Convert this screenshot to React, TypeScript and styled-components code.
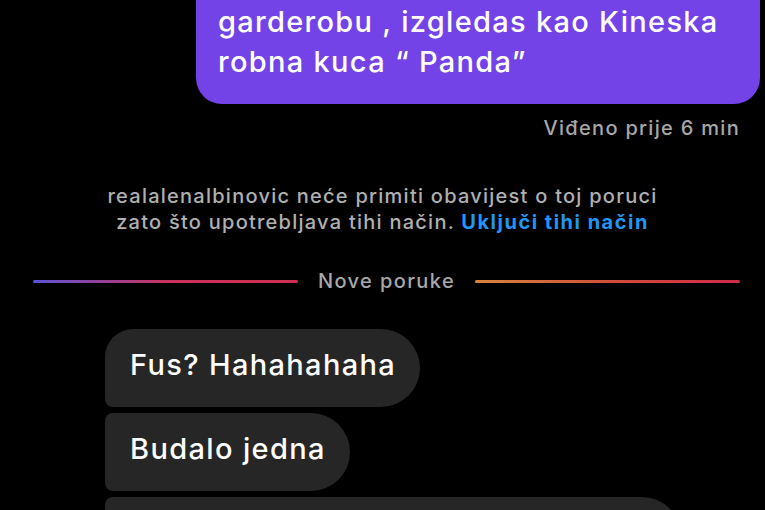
import React from "react";
import styled, { createGlobalStyle } from "styled-components";

const Global = createGlobalStyle`
  html, body { margin: 0; padding: 0; background: #000; }
  body { width: 765px; height: 510px; overflow: hidden; font-family: Inter, "Open Sans", "Liberation Sans", sans-serif; -webkit-font-smoothing: antialiased; }
`;

const Screen = styled.div`
  display: flex;
  flex-direction: column;
  width: 765px;
  height: 510px;
  overflow: hidden;
  background: #000;
`;

const OutRow = styled.div`
  display: flex;
  justify-content: flex-end;
  padding-right: 5px;
  margin-top: -40px;
`;

const OutBubble = styled.div`
  width: 564px;
  box-sizing: border-box;
  background: #7343e8;
  color: #fff;
  border-radius: 26px;
  padding: 42px 10px 22px 22px;
  font-size: 29px;
  line-height: 40px;
  font-weight: 500;
  letter-spacing: 1.3px;
`;

const SmallText = styled.div`
  font-size: 20px;
  line-height: 24px;
  font-weight: 500;
  letter-spacing: 1.3px;
  color: #a8a8a8;
`;

const Seen = styled(SmallText)`
  align-self: flex-end;
  margin-right: 25px;
  margin-top: 12px;
`;

const Notice = styled(SmallText)`
  margin-top: 43px;
  text-align: center;
  line-height: 26px;
  color: #b0b0b0;
  letter-spacing: 1.25px;
`;

const Link = styled.span`
  color: #2196f3;
  font-weight: 700;
  letter-spacing: 1.5px;
`;

const Divider = styled.div`
  display: flex;
  align-items: center;
  gap: 20px;
  margin-top: 34px;
  padding: 0 25px 0 33px;
`;

const Line = styled.div<{ $from: string; $mid: string; $to: string }>`
  flex: 1;
  height: 3px;
  border-radius: 2px;
  background: linear-gradient(90deg, ${(p) => p.$from}, ${(p) => p.$mid} 50%, ${(p) => p.$to});
`;

const DividerText = styled(SmallText)`
  letter-spacing: 1.4px;
`;

const InList = styled.div`
  display: flex;
  flex-direction: column;
  align-items: flex-start;
  gap: 6px;
  margin-top: 36px;
  padding-left: 105px;
`;

const InBubble = styled.div<{ $tl: number; $bl: number; $w?: number }>`
  box-sizing: border-box;
  height: 78px;
  ${(p) => (p.$w ? `width: ${p.$w}px;` : "")}
  display: flex;
  align-items: center;
  padding: 0 24px 7px 25px;
  background: #262626;
  color: #fff;
  font-size: 29px;
  font-weight: 500;
  letter-spacing: 1.35px;
  border-radius: ${(p) => p.$tl}px 39px 39px ${(p) => p.$bl}px;
  flex-shrink: 0;
`;

export default function App() {
  return (
    <>
      <Global />
      <Screen>
        <OutRow>
          <OutBubble>
            garderobu , izgledas kao Kineska
            <br />
            robna kuca “ Panda”
          </OutBubble>
        </OutRow>
        <Seen>Viđeno prije 6 min</Seen>
        <Notice>
          realalenalbinovic neće primiti obavijest o toj poruci
          <br />
          zato što upotrebljava tihi način. <Link>Uključi tihi način</Link>
        </Notice>
        <Divider>
          <Line $from="#5b52d6" $mid="#c8325e" $to="#cf2f52" />
          <DividerText>Nove poruke</DividerText>
          <Line $from="#d8843e" $mid="#d0503a" $to="#cf2a48" />
        </Divider>
        <InList>
          <InBubble $tl={28} $bl={8}>Fus? Hahahahaha</InBubble>
          <InBubble $tl={8} $bl={8}>Budalo jedna</InBubble>
          <InBubble $tl={8} $bl={8} $w={576}>&nbsp;</InBubble>
        </InList>
      </Screen>
    </>
  );
}
